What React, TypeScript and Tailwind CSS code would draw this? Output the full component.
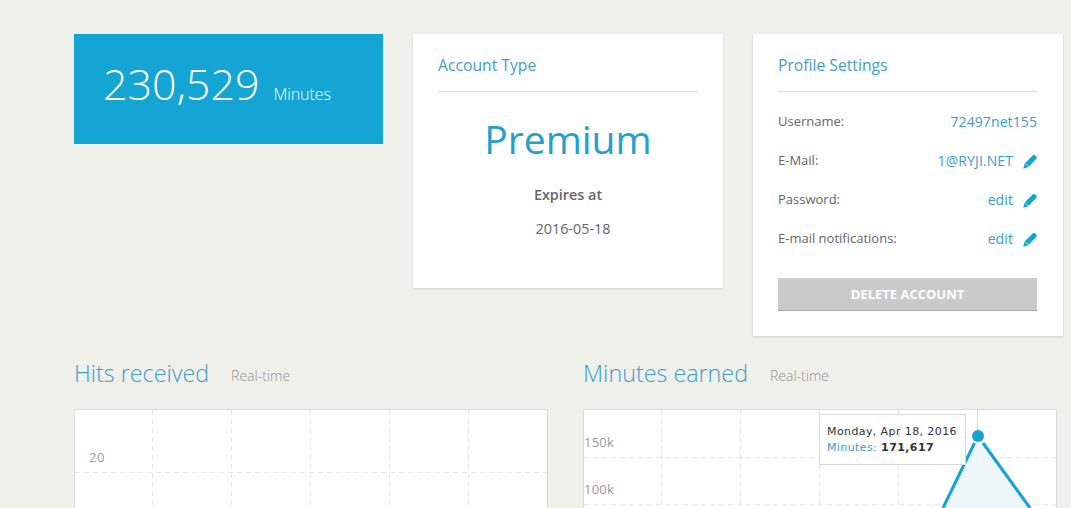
const profileRows = [
  { label: 'E-Mail:', value: '1@RYJI.NET' },
  { label: 'Password:', value: 'edit' },
  { label: 'E-mail notifications:', value: 'edit' },
];

const CardTitle = ({ children }: { children: string }) => (
  <h3 className="text-[15.7px] leading-[22px] text-[#4a9bc4] pb-[15px] border-b border-[#dcdcdc]">{children}</h3>
);

const ChartHeading = ({ title }: { title: string }) => (
  <div className="flex items-baseline h-[32px]">
    <h2 className="text-[23.3px] leading-[32px] font-light text-[#3d9cc9]">{title}</h2>
    <span className="ml-[22px] -translate-y-px text-[14px] font-light text-[#8f8f8f]">Real-time</span>
  </div>
);

const Pencil = () => (
  <svg width="14" height="15" viewBox="0 0 14 15" className="ml-[10px] shrink-0">
    <path
      d="M0.3 14.7L1.6 9.6L9.6 1.4Q10.8 0.3 12 1.4L13.2 2.6Q14.3 3.8 13.2 5L5.2 13.2Z"
      fill="#14a5d5"
    />
    <path d="M1.9 9.4L5.3 12.9" stroke="#fff" strokeWidth="0.7" />
  </svg>
);

const HitsChart = () => (
  <svg width="472" height="120" className="block" fill="none">
    <g stroke="#e6e6e6" strokeDasharray="5 4">
      <path d="M77.5 0V120M156.5 0V120M235.5 0V120M314.5 0V120M393.5 0V120" />
      <path d="M0 62.5H472" />
    </g>
    <text x="14" y="52" fontSize="13" fill="#999" letterSpacing="0.6">20</text>
  </svg>
);

const MinutesChart = () => (
  <svg width="472" height="120" className="block" fill="none">
    <g stroke="#e6e6e6" strokeDasharray="5 4">
      <path d="M77.5 0V120M156.5 0V120M235.5 0V120M314.5 0V120" />
      <path d="M0 47.5H472M0 94.5H472" />
    </g>
    <path d="M393.5 0V120" stroke="#d8d8d8" />
    <path d="M359 98L394 26L446 98Z" fill="#edf6f8" />
    <path d="M359 98L390.5 33M399 33L446 98" stroke="#14a3d3" strokeWidth="3" />
    <circle cx="394" cy="26" r="6" fill="#14a3d3" />
    <text x="0" y="37" fontSize="13" fill="#999" letterSpacing="0.2">150k</text>
    <text x="0" y="84" fontSize="13" fill="#999" letterSpacing="0.2">100k</text>
  </svg>
);

export default function App() {
  return (
    <div className="h-[508px] overflow-hidden bg-[#f0f0eb] pt-[34px] pl-[74px] font-['Open_Sans',sans-serif]">
      <div className="flex items-start">
        <div className="w-[309px] h-[110px] bg-[#14a5d5] text-white flex items-baseline pl-[29px] pt-[21px]">
          <span className="text-[43px] leading-[57px] font-light">230,529</span>
          <span className="ml-[14px] text-[16px] font-light tracking-[-0.1px]">Minutes</span>
        </div>

        <div className="ml-[30px] w-[310px] h-[254px] bg-white shadow-[0_1px_2px_rgba(0,0,0,0.15)] px-[25px] pt-[20px]">
          <CardTitle>Account Type</CardTitle>
          <div className="text-center">
            <div className="mt-[21px] text-[39px] leading-[52px] text-[#24a0cc]">Premium</div>
            <div className="mt-[20px] text-[14.4px] leading-[20px] font-semibold text-[#666]">Expires at</div>
            <div className="mt-[14px] pl-[10px] text-[14.4px] leading-[20px] text-[#666]">2016-05-18</div>
          </div>
        </div>

        <div className="ml-[30px] w-[310px] h-[302px] bg-white shadow-[0_1px_2px_rgba(0,0,0,0.15)] pl-[25px] pr-[26px] pt-[20px]">
          <CardTitle>Profile Settings</CardTitle>
          <div className="mt-[20px] flex items-center justify-between h-[20px]">
            <span className="text-[13px] text-[#666]">Username:</span>
            <span className="-translate-y-px text-[14px] text-[#3d9cc9] tracking-[0.1px]">72497net155</span>
          </div>
          {profileRows.map((row) => (
            <div key={row.label} className="mt-[19px] flex items-center justify-between h-[20px]">
              <span className="text-[13px] text-[#666]">{row.label}</span>
              <span className="flex items-center">
                <span className="-translate-y-px text-[14px] text-[#3d9cc9] tracking-[0.1px]">{row.value}</span>
                <Pencil />
              </span>
            </div>
          ))}
          <button className="mt-[29px] block w-full h-[33px] pt-[1px] bg-[#cacaca] border-b border-[#a9a9a9] text-white text-[13px] font-bold">
            DELETE ACCOUNT
          </button>
        </div>
      </div>

      <div className="flex mt-[21px]">
        <div className="w-[474px]">
          <ChartHeading title="Hits received" />
          <div className="mt-[20px] border border-[#d9d9d9] bg-white">
            <HitsChart />
          </div>
        </div>
        <div className="ml-[35px] w-[474px]">
          <ChartHeading title="Minutes earned" />
          <div className="relative mt-[20px] border border-[#d9d9d9] bg-white">
            <MinutesChart />
            <div className="absolute left-[235px] top-[4px] w-[147px] h-[51px] bg-white border border-[#d9d9d9] pl-[7px] pt-[9px] text-[11px] leading-[16px] tracking-[0.4px] font-['DejaVu_Sans',sans-serif] text-[#333]">
              <div className="whitespace-nowrap">Monday, Apr 18, 2016</div>
              <div className="whitespace-nowrap">
                <span className="text-[#3d9cc9]">Minutes: </span>
                <b>171,617</b>
              </div>
            </div>
          </div>
        </div>
      </div>
    </div>
  );
}
